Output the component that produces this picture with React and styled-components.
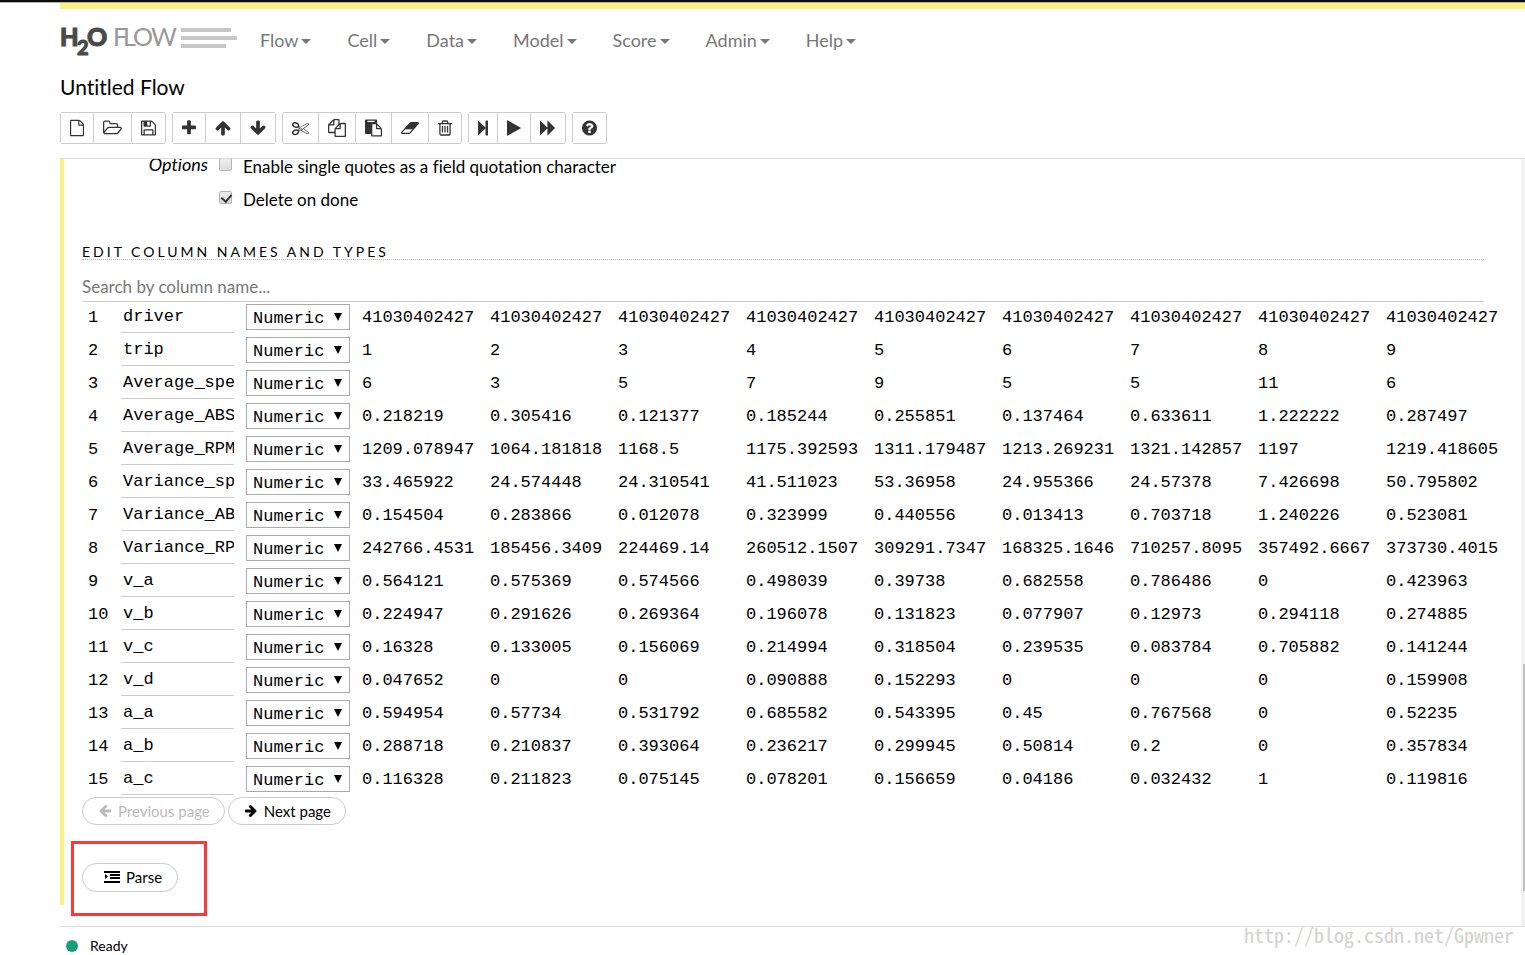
import React, { useState } from "react";
import styled, { createGlobalStyle } from "styled-components";

const SAMPLES = [
  ["driver", "41030402427", "41030402427", "41030402427", "41030402427", "41030402427", "41030402427", "41030402427", "41030402427", "41030402427"],
  ["trip", "1", "2", "3", "4", "5", "6", "7", "8", "9"],
  ["Average_speed", "6", "3", "5", "7", "9", "5", "5", "11", "6"],
  ["Average_ABS", "0.218219", "0.305416", "0.121377", "0.185244", "0.255851", "0.137464", "0.633611", "1.222222", "0.287497"],
  ["Average_RPM", "1209.078947", "1064.181818", "1168.5", "1175.392593", "1311.179487", "1213.269231", "1321.142857", "1197", "1219.418605"],
  ["Variance_speed", "33.465922", "24.574448", "24.310541", "41.511023", "53.36958", "24.955366", "24.57378", "7.426698", "50.795802"],
  ["Variance_ABS", "0.154504", "0.283866", "0.012078", "0.323999", "0.440556", "0.013413", "0.703718", "1.240226", "0.523081"],
  ["Variance_RPM", "242766.4531", "185456.3409", "224469.14", "260512.1507", "309291.7347", "168325.1646", "710257.8095", "357492.6667", "373730.4015"],
  ["v_a", "0.564121", "0.575369", "0.574566", "0.498039", "0.39738", "0.682558", "0.786486", "0", "0.423963"],
  ["v_b", "0.224947", "0.291626", "0.269364", "0.196078", "0.131823", "0.077907", "0.12973", "0.294118", "0.274885"],
  ["v_c", "0.16328", "0.133005", "0.156069", "0.214994", "0.318504", "0.239535", "0.083784", "0.705882", "0.141244"],
  ["v_d", "0.047652", "0", "0", "0.090888", "0.152293", "0", "0", "0", "0.159908"],
  ["a_a", "0.594954", "0.57734", "0.531792", "0.685582", "0.543395", "0.45", "0.767568", "0", "0.52235"],
  ["a_b", "0.288718", "0.210837", "0.393064", "0.236217", "0.299945", "0.50814", "0.2", "0", "0.357834"],
  ["a_c", "0.116328", "0.211823", "0.075145", "0.078201", "0.156659", "0.04186", "0.032432", "1", "0.119816"],
];

const MENUS = ["Flow", "Cell", "Data", "Model", "Score", "Admin", "Help"];

const TYPES = ["Numeric", "Enum", "String", "Time", "UUID"];

// box: [min x, width in units, drawn width in px], every glyph is 1792 units tall
const ICONS = {
  file: {
    box: [128, 1536, 14],
    d: "M1596 380q28 28 48 76t20 88v1152q0 40-28 68t-68 28h-1344q-40 0-68-28t-28-68v-1600q0-40 28-68t68-28h896q40 0 88 20t76 48zm-444-244v376h376q-10-29-22-41l-313-313q-12-12-41-22zm384 1528v-1024h-416q-40 0-68-28t-28-68v-416h-768v1536h1280z",
  },
  folder: {
    box: [64, 1920, 19],
    d: "M1845 931q0-35-53-35h-1088q-40 0-85.5 21.5t-71.5 52.5l-294 363q-18 24-18 40 0 35 53 35h1088q40 0 86-22t71-53l294-363q18-22 18-39zm-1141-163h768v-160q0-40-28-68t-68-28h-576q-40 0-68-28t-28-68v-64q0-40-28-68t-68-28h-320q-40 0-68 28t-28 68v853l256-315q44-53 116-87.5t140-34.5zm1269 163q0 62-46 120l-295 363q-43 53-116 87.5t-140 34.5h-1088q-92 0-158-66t-66-158v-960q0-92 66-158t158-66h320q92 0 158 66t66 158v32h544q92 0 158 66t66 158v160h192q54 0 99 24.5t67 70.5q15 32 15 68z",
  },
  save: {
    box: [128, 1536, 15],
    d: "M512 1536h768v-384h-768v384zm896 0h128v-896q0-14-10-38.5t-20-34.5l-281-281q-10-10-34-20t-39-10v416q0 40-28 68t-68 28h-576q-40 0-68-28t-28-68v-416h-128v1280h128v-416q0-40 28-68t68-28h832q40 0 68 28t28 68v416zm-384-928v-320q0-13-9.5-22.5t-22.5-9.5h-192q-13 0-22.5 9.5t-9.5 22.5v320q0 13 9.5 22.5t22.5 9.5h192q13 0 22.5-9.5t9.5-22.5zm640 32v928q0 40-28 68t-68 28h-1344q-40 0-68-28t-28-68v-1344q0-40 28-68t68-28h928q40 0 88 20t76 48l280 280q28 28 48 76t20 88z",
  },
  plus: {
    box: [192, 1408, 14],
    d: "M1600 736v192q0 40-28 68t-68 28h-416v416q0 40-28 68t-68 28h-192q-40 0-68-28t-28-68v-416h-416q-40 0-68-28t-28-68v-192q0-40 28-68t68-28h416v-416q0-40 28-68t68-28h192q40 0 68 28t28 68v416h416q40 0 68 28t28 68z",
  },
  up: {
    box: [64, 1664, 16],
    d: "M1675 971q0 51-37 90l-75 75q-38 38-91 38-54 0-90-38l-294-293v704q0 52-37.5 84.5t-90.5 32.5h-128q-53 0-90.5-32.5t-37.5-84.5v-704l-294 293q-36 38-90 38t-90-38l-75-75q-38-38-38-90 0-53 38-91l651-651q35-37 90-37 54 0 91 37l651 651q37 39 37 91z",
  },
  down: {
    box: [64, 1664, 16],
    d: "M1675 832q0 53-37 90l-651 652q-39 37-91 37-53 0-90-37l-651-652q-38-36-38-90 0-53 38-91l74-75q39-37 91-37 53 0 90 37l294 294v-704q0-52 38-90t90-38h128q52 0 90 38t38 90v704l294-294q37-37 90-37 52 0 91 37l75 75q37 39 37 91z",
  },
  cut: {
    box: [0, 1792, 17],
    d: "M960 896q26 0 45 19t19 45-19 45-45 19-45-19-19-45 19-45 45-19zm300 64l507 398q28 20 25 56-5 35-35 51l-128 64q-13 7-29 7-17 0-31-8l-690-387-110 66q-8 4-12 5 14 49 10 97-7 77-56 147.5t-132 123.5q-132 84-277 84-136 0-222-78-90-84-79-207 7-76 56-147t131-124q132-84 278-84 83 0 151 31 9-13 22-22l122-73-122-73q-13-9-22-22-68 31-151 31-146 0-278-84-82-53-131-124t-56-147q-5-59 15.5-113t63.5-93q85-79 222-79 145 0 277 84 83 52 132 123t56 148q4 48-10 97 4 1 12 5l110 66 690-387q14-8 31-8 16 0 29 7l128 64q30 16 35 51 3 36-25 56zm-681-260q46-42 21-108t-106-117q-92-59-192-59-74 0-113 36-46 42-21 108t106 117q92 59 192 59 74 0 113-36zm-85 745q81-51 106-117t-21-108q-39-36-113-36-100 0-192 59-81 51-106 117t21 108q39 36 113 36 100 0 192-59zm178-613l96 58v-11q0-36 33-56l14-8-79-44-26 26q-3 3-10 11t-12 12q-2 2-4 3.5t-3 2.5zm224 224l96 32 736-576-128-64-768 431v113l-160 96 9 8q2 2 7 6 4 4 11 12t11 12l26 26zm704 416l128-64-520-408-177 138q-2 3-13 7z",
  },
  copy: {
    box: [0, 1792, 18],
    d: "M1696 384q40 0 68 28t28 68v1216q0 40-28 68t-68 28h-960q-40 0-68-28t-28-68v-288h-544q-40 0-68-28t-28-68v-672q0-40 20-88t48-76l408-408q28-28 76-48t88-20h416q40 0 68 28t28 68v328q68-40 128-40h416zm-544 213l-299 299h299v-299zm-640-384l-299 299h299v-299zm196 647l316-316v-416h-384v416q0 40-28 68t-68 28h-416v640h512v-256q0-40 20-88t48-76zm956 804v-1152h-384v416q0 40-28 68t-68 28h-416v640h896z",
  },
  paste: {
    box: [0, 1792, 17],
    d: "M768 1664h896v-640h-416q-40 0-68-28t-28-68v-416h-384v1152zm256-1440v-64q0-13-9.5-22.5t-22.5-9.5h-704q-13 0-22.5 9.5t-9.5 22.5v64q0 13 9.5 22.5t22.5 9.5h704q13 0 22.5-9.5t9.5-22.5zm256 672h299l-299-299v299zm512 128v672q0 40-28 68t-68 28h-960q-40 0-68-28t-28-68v-160h-544q-40 0-68-28t-28-68v-1344q0-40 28-68t68-28h1088q40 0 68 28t28 68v328q21 13 36 28l408 408q28 28 48 76t20 88z",
  },
  eraser: {
    box: [64, 1920, 18],
    d: "M960 1408l336-384h-768l-336 384h768zm1013-1077q15 34 9.5 71.5t-30.5 65.5l-896 1024q-38 44-96 44h-768q-38 0-69.5-20.5t-47.5-54.5q-15-34-9.5-71.5t30.5-65.5l896-1024q38-44 96-44h768q38 0 69.5 20.5t47.5 54.5z",
  },
  trash: {
    box: [192, 1408, 14],
    d: "M704 736v576q0 14-9 23t-23 9h-64q-14 0-23-9t-9-23v-576q0-14 9-23t23-9h64q14 0 23 9t9 23zm256 0v576q0 14-9 23t-23 9h-64q-14 0-23-9t-9-23v-576q0-14 9-23t23-9h64q14 0 23 9t9 23zm256 0v576q0 14-9 23t-23 9h-64q-14 0-23-9t-9-23v-576q0-14 9-23t23-9h64q14 0 23 9t9 23zm128 724v-948h-896v948q0 22 7 40.5t14.5 27 10.5 8.5h832q3 0 10.5-8.5t14.5-27 7-40.5zm-672-1076h448l-48-117q-7-9-17-11h-317q-10 2-17 11zm928 32v64q0 14-9 23t-23 9h-96v948q0 83-47 143.5t-113 60.5h-832q-66 0-113-58.5t-47-141.5v-952h-96q-14 0-23-9t-9-23v-64q0-14 9-23t23-9h309l70-167q15-37 54-63t79-26h320q40 0 79 26t54 63l70 167h309q14 0 23 9t9 23z",
  },
  step: {
    box: [64, 1024, 10],
    d: "M109 1651q-19 19-32 13t-13-32v-1472q0-26 13-32t32 13l710 710q9 9 13 19v-678q0-26 19-45t45-19h128q26 0 45 19t19 45v1408q0 26-19 45t-45 19h-128q-26 0-45-19t-19-45v-678q-4 10-13 19z",
  },
  play: {
    box: [192, 1408, 14],
    d: "M1576 927l-1328 738q-23 13-39.5 3t-16.5-36v-1472q0-26 16.5-36t39.5 3l1328 738q23 13 23 31t-23 31z",
  },
  forward: {
    box: [0, 1664, 16],
    d: "M45 1651q-19 19-32 13t-13-32v-1472q0-26 13-32t32 13l710 710q9 9 13 19v-710q0-26 13-32t32 13l710 710q19 19 19 45t-19 45l-710 710q-19 19-32 13t-13-32v-710q-4 10-13 19z",
  },
  help: {
    box: [128, 1536, 15],
    d: "M1024 1376v-192q0-14-9-23t-23-9h-192q-14 0-23 9t-9 23v192q0 14 9 23t23 9h192q14 0 23-9t9-23zm256-672q0-88-55.5-163t-138.5-116-170-41q-243 0-371 213-15 24 8 42l132 100q7 6 19 6 16 0 25-12 53-68 86-92 34-24 86-24 48 0 85.5 26t37.5 59q0 38-20 61t-68 45q-63 28-115.5 86.5t-52.5 125.5v36q0 14 9 23t23 9h192q14 0 23-9t9-23q0-19 21.5-49.5t54.5-49.5q32-18 49-28.5t46-35 44.5-48 28-60.5 12.5-81zm384 192q0 209-103 385.5t-279.5 279.5-385.5 103-385.5-103-279.5-279.5-103-385.5 103-385.5 279.5-279.5 385.5-103 385.5 103 279.5 279.5 103 385.5z",
  },
};

const TOOLS = [
  [["file", "New"], ["folder", "Open..."], ["save", "Save"]],
  [["plus", "Insert cell below"], ["up", "Move cell up"], ["down", "Move cell down"]],
  [["cut", "Cut cell"], ["copy", "Copy cell"], ["paste", "Paste cell below"], ["eraser", "Clear cell"], ["trash", "Delete cell"]],
  [["step", "Run and select below"], ["play", "Run"], ["forward", "Run all"]],
  [["help", "Assist me"]],
];

const ToolIcon = ({ name }) => {
  const { box, d } = ICONS[name];
  return (
    <svg width={box[2]} height="18" viewBox={`${box[0]} 0 ${box[1]} 1792`} fill="currentColor" aria-hidden="true">
      <path d={d} />
    </svg>
  );
};

const PageArrow = ({ left }) => (
  <svg width="14" height="14" viewBox="0 0 1792 1792" fill="currentColor" aria-hidden="true">
    <path d={ICONS.up.d} transform={`rotate(${left ? -90 : 90} 896 896)`} />
  </svg>
);

const Logo = () => (
  <svg width="178" height="40" viewBox="0 0 178 40" overflow="visible" role="img" aria-label="H2O Flow">
    <g fontFamily="Lato, sans-serif" fontWeight="900" fill="#4a4a4a" stroke="#4a4a4a">
      <text x="0" y="26" fontSize="24">H</text>
      <text x="17" y="35" fontSize="20">2</text>
      <text x="27" y="26" fontSize="25">O</text>
    </g>
    <text x="53 63 73 91" y="26" fontFamily="Lato, sans-serif" fontSize="25" fill="#999">FLOW</text>
    <g fill="#c6c6c6">
      <rect x="121" y="8" width="50" height="4" />
      <rect x="121" y="16" width="56" height="4" />
      <rect x="121" y="24" width="45" height="4" />
    </g>
  </svg>
);

const App = () => {
  const [singleQuotes, setSingleQuotes] = useState(false);
  const [deleteOnDone, setDeleteOnDone] = useState(true);
  const [search, setSearch] = useState("");

  const rows = SAMPLES.map((row, i) => ({ id: i + 1, name: row[0], values: row.slice(1) })).filter((row) =>
    row.name.toLowerCase().includes(search.toLowerCase())
  );

  return (
    <Page>
      <GlobalStyle />
      <TopEdge />
      <Workspace>
        <Progress />
        <Header>
          <Logo />
          <Menu>
            {MENUS.map((menu) => (
              <MenuButton key={menu} type="button">
                {menu}
                <Caret />
              </MenuButton>
            ))}
          </Menu>
        </Header>
        <Title>Untitled Flow</Title>
        <Toolbar>
          {TOOLS.map((group) => (
            <ToolGroup key={group[0][0]}>
              {group.map(([icon, label]) => (
                <ToolButton key={icon} type="button" title={label} aria-label={label}>
                  <ToolIcon name={icon} />
                </ToolButton>
              ))}
            </ToolGroup>
          ))}
        </Toolbar>

        <Notebook>
          <Viewport>
            <Cell>
              <OptionRow>
                <OptionTitle>Options</OptionTitle>
                <OptionLabel>
                  <Tick type="checkbox" checked={singleQuotes} onChange={(e) => setSingleQuotes(e.target.checked)} />
                  Enable single quotes as a field quotation character
                </OptionLabel>
              </OptionRow>
              <OptionRow>
                <OptionTitle />
                <OptionLabel>
                  <Tick type="checkbox" checked={deleteOnDone} onChange={(e) => setDeleteOnDone(e.target.checked)} />
                  Delete on done
                </OptionLabel>
              </OptionRow>

              <SectionTitle>EDIT COLUMN NAMES AND TYPES</SectionTitle>
              <Search
                type="text"
                aria-label="Search by column name"
                placeholder="Search by column name..."
                value={search}
                onChange={(e) => setSearch(e.target.value)}
              />

              <Columns>
                <colgroup>
                  <Col $width={33} />
                  <Col $width={125} />
                  <Col $width={116} />
                  {SAMPLES[0].slice(1).map((_, i) => (
                    <Col key={i} $width={128} />
                  ))}
                </colgroup>
                <tbody>
                  {rows.map((row) => (
                    <tr key={row.id}>
                      <Td>{row.id}</Td>
                      <Td>
                        <NameInput type="text" aria-label={`Column ${row.id} name`} defaultValue={row.name} />
                      </Td>
                      <Td>
                        <SelectBox>
                          <TypeSelect aria-label={`Column ${row.id} type`} defaultValue="Numeric">
                            {TYPES.map((type) => (
                              <option key={type}>{type}</option>
                            ))}
                          </TypeSelect>
                          <SelectArrow viewBox="0 0 8 8" aria-hidden="true">
                            <path d="M0 0h8L4 8z" />
                          </SelectArrow>
                        </SelectBox>
                      </Td>
                      {row.values.map((value, i) => (
                        <Td key={i}>{value}</Td>
                      ))}
                    </tr>
                  ))}
                </tbody>
              </Columns>

              <Pager>
                <PillButton type="button" disabled>
                  <PageArrow left />
                  Previous page
                </PillButton>
                <PillButton type="button">
                  <PageArrow />
                  Next page
                </PillButton>
              </Pager>

              <ParseArea>
                <PillButton type="button" $wide>
                  <svg width="16" height="12" viewBox="0 0 16 12" fill="currentColor" aria-hidden="true">
                    <path d="M0 0h16v2H0zM6 3h10v2H6zM6 6h10v2H6zM0 10h16v2H0zM1 3l3 2.5L1 8z" />
                  </svg>
                  Parse
                </PillButton>
                <Highlight />
              </ParseArea>
            </Cell>
          </Viewport>
          <ScrollTrack>
            <ScrollThumb />
          </ScrollTrack>
        </Notebook>

        <StatusBar>
          <StatusDot />
          Ready
          <Watermark>http://blog.csdn.net/Gpwner</Watermark>
        </StatusBar>
      </Workspace>
    </Page>
  );
};

export default App;

// Styled Components
const GlobalStyle = createGlobalStyle`
  * {
    box-sizing: border-box;
  }

  body {
    margin: 0;
    background: #fff;
    color: #000;
    font-family: Lato, sans-serif;
    font-size: 18px;
    font-variant-ligatures: none;
  }

  button, input, select {
    font: inherit;
    color: inherit;
  }
`;

const Page = styled.div`
  display: flex;
  flex-direction: column;
  height: 100vh;
  overflow: hidden;
`;

const TopEdge = styled.div`
  flex: none;
  height: 3px;
  background: #0d0d0d;
  border-bottom: 1px solid #b5b5ad;
`;

const Workspace = styled.div`
  display: flex;
  flex: 1;
  flex-direction: column;
  min-height: 0;
  margin-left: 60px;
`;

const Progress = styled.div`
  flex: none;
  height: 6px;
  background: #fbf083;
`;

const Header = styled.header`
  display: flex;
  flex: none;
  align-items: center;
  gap: 22px;
  height: 62px;
`;

const Menu = styled.nav`
  display: flex;
  gap: 36px;
`;

const MenuButton = styled.button`
  display: flex;
  align-items: center;
  gap: 3px;
  padding: 0;
  border: 0;
  background: none;
  color: #777;
  line-height: 24px;
  cursor: pointer;
`;

const Caret = styled.span`
  margin-top: 3px;
  border: 5px solid transparent;
  border-top-color: currentColor;
  border-bottom: 0;
`;

const Title = styled.h1`
  flex: none;
  margin: 0;
  font-size: 21px;
  font-weight: 400;
  line-height: 32px;
`;

const Toolbar = styled.div`
  display: flex;
  flex: none;
  gap: 6px;
  padding: 9px 0 14px;
`;

const ToolGroup = styled.div`
  display: flex;
  border: 1px solid #ccc;
  border-radius: 2px;
`;

const ToolButton = styled.button`
  display: flex;
  align-items: center;
  height: 30px;
  padding: 0 9px;
  border: 0;
  background: #fff;
  color: #333;
  cursor: pointer;

  & + & {
    border-left: 1px solid #ccc;
  }
`;

const Notebook = styled.main`
  display: flex;
  flex: 1;
  min-height: 0;
  border-top: 1px solid #ddd;
`;

// Scrolled to its end, so the content hangs from the bottom edge
const Viewport = styled.div`
  display: flex;
  flex: 1;
  flex-direction: column;
  justify-content: flex-end;
  min-width: 0;
  padding-bottom: 21px;
  overflow: hidden;
`;

const Cell = styled.section`
  flex: none;
  padding: 0 37px 13px 18px;
  border-left: 4px solid #f9f086;
`;

const OptionRow = styled.div`
  display: flex;
  gap: 11px;
  height: 33px;
`;

const OptionTitle = styled.span`
  width: 126px;
  font-style: italic;
  line-height: 28px;
  text-align: right;
`;

const OptionLabel = styled.label`
  display: flex;
  align-items: flex-start;
  gap: 11px;
  font-size: 17px;
  line-height: 34px;
`;

const Tick = styled.input`
  appearance: none;
  width: 13px;
  height: 13px;
  margin: 8px 0 0;
  border: 1px solid #b4b4b4;
  border-radius: 2px;
  background: linear-gradient(#eee, #dcdcdc);

  &:checked::before {
    content: "";
    display: block;
    width: 5px;
    height: 8px;
    margin-left: 3px;
    border: solid #333;
    border-width: 0 2px 2px 0;
    transform: rotate(40deg);
  }
`;

const SectionTitle = styled.h2`
  margin: 29px 0 0;
  border-bottom: 1px dotted #bbb;
  font-size: 14px;
  font-weight: 400;
  line-height: 14px;
  letter-spacing: 3px;
`;

const Search = styled.input`
  display: block;
  width: 100%;
  height: 30px;
  margin-top: 12px;
  padding: 0;
  border: 0;
  border-bottom: 1px solid #ccc;
  outline: 0;
  font-size: 17px;

  &::placeholder {
    color: #777;
    opacity: 1;
  }
`;

const Columns = styled.table`
  width: 1426px;
  border-collapse: collapse;
  table-layout: fixed;
  font-family: "Liberation Mono", monospace;
  font-size: 17px;
`;

const Col = styled.col`
  width: ${(props) => props.$width}px;
`;

const Td = styled.td`
  height: 33px;
  padding: 0 6px;
  line-height: 32px;
  white-space: nowrap;
  vertical-align: top;
`;

const NameInput = styled.input`
  display: block;
  width: 113px;
  height: 31px;
  padding: 0 0 0 2px;
  border: 0;
  border-bottom: 1px solid #ccc;
  outline: 0;
`;

const SelectBox = styled.div`
  position: relative;
  margin-top: 2px;
`;

const TypeSelect = styled.select`
  appearance: none;
  display: block;
  width: 104px;
  height: 26px;
  padding: 2px 0 0 6px;
  border: 1px solid #aaa;
  border-radius: 0;
  background: #fff;
  line-height: 24px;
`;

const SelectArrow = styled.svg`
  position: absolute;
  top: 9px;
  right: 8px;
  width: 8px;
  height: 8px;
  pointer-events: none;
`;

const Pager = styled.div`
  display: flex;
  gap: 3px;
`;

const PillButton = styled.button`
  display: flex;
  align-items: center;
  gap: 6px;
  height: ${(props) => (props.$wide ? 29 : 28)}px;
  padding: ${(props) => (props.$wide ? "0 15px 1px 21px" : "0 14px 0 15px")};
  border: 1px solid #ccc;
  border-radius: 15px;
  background: #fff;
  font-size: 15px;
  cursor: pointer;

  &:disabled {
    color: #bbb;
    cursor: default;
  }
`;

const ParseArea = styled.div`
  position: relative;
  width: fit-content;
  margin-top: 38px;
`;

const Highlight = styled.div`
  position: absolute;
  inset: -22px -29px -24px -11px;
  border: 3px solid #fb3939;
  pointer-events: none;
`;

const ScrollTrack = styled.div`
  display: flex;
  flex-direction: column;
  justify-content: flex-end;
  width: 4px;
  padding: 0 0 35px 2px;
  background: #f1f1f1;
`;

const ScrollThumb = styled.div`
  height: 31%;
  background: #c1c1c1;
`;

const StatusBar = styled.footer`
  position: relative;
  display: flex;
  flex: none;
  align-items: center;
  gap: 12px;
  height: 29px;
  padding: 10px 0 0 6px;
  border-top: 1px solid #ddd;
  font-size: 14px;
  line-height: 18px;
`;

const StatusDot = styled.span`
  width: 12px;
  height: 12px;
  border-radius: 50%;
  background: #1b9e77;
`;

const Watermark = styled.span`
  position: absolute;
  top: 0;
  right: 11px;
  color: #d2d2ce;
  font-family: "Noto Sans Mono CJK SC", "Liberation Mono", monospace;
  font-size: 20px;
  font-weight: 300;
  line-height: 16px;
`;
